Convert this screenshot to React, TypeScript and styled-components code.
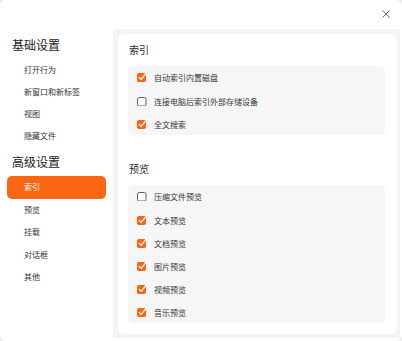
import React from "react";
import styled, { createGlobalStyle } from "styled-components";

const ORANGE = "#fa6612";
const FONT = `"Noto Sans CJK SC", "Noto Sans", sans-serif`;

const GlobalStyle = createGlobalStyle`
  html, body {
    margin: 0;
    padding: 0;
    background: #ececec;
  }
  body {
    font-family: ${FONT};
  }
`;

const Window = styled.div`
  width: 402px;
  height: 341px;
  box-sizing: border-box;
  background: #ffffff;
  border-radius: 6px;
  display: flex;
  flex-direction: column;
  overflow: hidden;
  padding: 0 2px 3px 0;
`;

const TitleBar = styled.div`
  height: 29px;
  display: flex;
  justify-content: flex-end;
  align-items: flex-start;
  flex-shrink: 0;
`;

const CloseButton = styled.button`
  border: none;
  background: transparent;
  padding: 0;
  margin: 10px 10px 0 0;
  width: 8px;
  height: 8px;
  display: flex;
  cursor: pointer;
`;

const Body = styled.div`
  flex: 1;
  display: flex;
  min-height: 0;
`;

const Sidebar = styled.nav`
  width: 113px;
  flex-shrink: 0;
  box-sizing: border-box;
  padding: 6px 7px 0 7px;
  display: flex;
  flex-direction: column;
`;

const GroupHeader = styled.div<{ $gap?: number }>`
  height: 20px;
  line-height: 20px;
  font-size: 12px;
  color: #222222;
  padding-left: 5px;
  margin-top: ${(p) => p.$gap ?? 0}px;
  margin-bottom: 4px;
`;

const NavItem = styled.div<{ $active?: boolean; $h: number }>`
  height: ${(p) => p.$h}px;
  line-height: ${(p) => p.$h}px;
  font-size: 8px;
  padding-left: 17px;
  border-radius: 5px;
  color: ${(p) => (p.$active ? "#ffffff" : "#333333")};
  background: ${(p) => (p.$active ? ORANGE : "transparent")};
`;

const Content = styled.main`
  flex: 1;
  background: #f4f4f5;
  padding: 5px 3px 4px 5px;
  display: flex;
  border-radius: 4px 0 0 0;
`;

const Card = styled.div`
  flex: 1;
  background: #ffffff;
  border-radius: 6px;
  padding: 10px 12px 10px 10px;
  display: flex;
  flex-direction: column;
`;

const SectionTitle = styled.div<{ $gap?: number }>`
  height: 12px;
  line-height: 12px;
  font-size: 10px;
  color: #2e2e2e;
  padding-left: 1px;
  margin-top: ${(p) => p.$gap ?? 0}px;
  margin-bottom: 10px;
`;

const OptionGroup = styled.div`
  background: #f6f6f7;
  border-radius: 5px;
  display: flex;
  flex-direction: column;
`;

const OptionRow = styled.label`
  height: 23px;
  box-sizing: border-box;
  display: flex;
  align-items: center;
  gap: 6px;
  padding-left: 9px;
  font-size: 8px;
  color: #333333;
  & + & {
    border-top: 1px solid #fbfbfb;
  }
`;

const BoxIcon = styled.svg`
  width: 11px;
  height: 11px;
  flex-shrink: 0;
  margin-top: -2px;
`;

function CheckBox({ checked }: { checked: boolean }) {
  return (
    <BoxIcon viewBox="0 0 11 11">
      {checked ? (
        <>
          <rect x="0" y="2" width="9" height="9" rx="1.8" fill={ORANGE} />
          <path
            d="M2.2 6.4 L4.2 8.4 L9.6 1.6"
            fill="none"
            stroke="#ffffff"
            strokeWidth="1.3"
            strokeLinecap="round"
            strokeLinejoin="round"
          />
        </>
      ) : (
        <rect
          x="0.5"
          y="2.5"
          width="8.5"
          height="8.5"
          rx="1.8"
          fill="#ffffff"
          stroke="#5e5e5e"
          strokeWidth="1"
        />
      )}
    </BoxIcon>
  );
}

const basicItems = ["打开行为", "新窗口和新标签", "视图", "隐藏文件"];
const advancedItems = ["索引", "预览", "挂载", "对话框", "其他"];

const indexOptions = [
  { label: "自动索引内置磁盘", checked: true },
  { label: "连接电脑后索引外部存储设备", checked: false },
  { label: "全文搜索", checked: true },
];

const previewOptions = [
  { label: "压缩文件预览", checked: false },
  { label: "文本预览", checked: true },
  { label: "文档预览", checked: true },
  { label: "图片预览", checked: true },
  { label: "视频预览", checked: true },
  { label: "音乐预览", checked: true },
];

export default function App() {
  return (
    <>
      <GlobalStyle />
      <Window>
        <TitleBar>
          <CloseButton aria-label="关闭">
            <svg width="8" height="8" viewBox="0 0 8 8">
              <path
                d="M0.8 0.8 L7.2 7.2 M7.2 0.8 L0.8 7.2"
                stroke="#555"
                strokeWidth="0.9"
                strokeLinecap="round"
              />
            </svg>
          </CloseButton>
        </TitleBar>
        <Body>
          <Sidebar>
            <GroupHeader>基础设置</GroupHeader>
            {basicItems.map((item) => (
              <NavItem key={item} $h={22}>
                {item}
              </NavItem>
            ))}
            <GroupHeader $gap={5}>高级设置</GroupHeader>
            {advancedItems.map((item, i) => (
              <NavItem key={item} $h={22.5} $active={i === 0}>
                {item}
              </NavItem>
            ))}
          </Sidebar>
          <Content>
            <Card>
              <SectionTitle>索引</SectionTitle>
              <OptionGroup>
                {indexOptions.map((o) => (
                  <OptionRow key={o.label}>
                    <CheckBox checked={o.checked} />
                    {o.label}
                  </OptionRow>
                ))}
              </OptionGroup>
              <SectionTitle $gap={28}>预览</SectionTitle>
              <OptionGroup>
                {previewOptions.map((o) => (
                  <OptionRow key={o.label}>
                    <CheckBox checked={o.checked} />
                    {o.label}
                  </OptionRow>
                ))}
              </OptionGroup>
            </Card>
          </Content>
        </Body>
      </Window>
    </>
  );
}
